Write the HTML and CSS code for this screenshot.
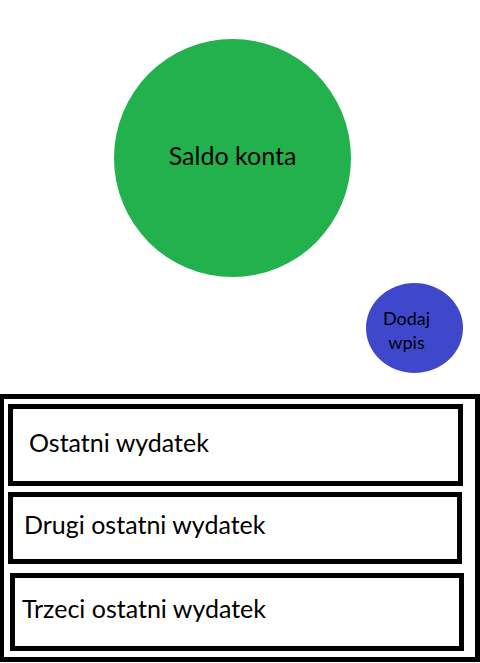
FILE: index.html
```html
<!DOCTYPE html>
<html lang="pl">
<head>
<meta charset="utf-8">
<title>Saldo</title>
<link rel="stylesheet" href="styles.css">
</head>
<body>
<main class="screen">
  <section class="top">
    <div class="balance">Saldo konta</div>
    <button class="add-btn" type="button">Dodaj<br>wpis</button>
  </section>
  <section class="expenses">
    <div class="expense expense-1">Ostatni wydatek</div>
    <div class="expense expense-2">Drugi ostatni wydatek</div>
    <div class="expense expense-3">Trzeci ostatni wydatek</div>
  </section>
</main>
</body>
</html>
```
FILE: styles.css
```css
html, body {
  margin: 0;
  padding: 0;
  background: #ffffff;
}

body {
  font-family: Lato, "Open Sans", "Liberation Sans", sans-serif;
  color: #000000;
  width: 480px;
  height: 663px;
  overflow: hidden;
}

.screen {
  display: flex;
  flex-direction: column;
}

.top {
  height: 394px;
  display: flex;
  flex-direction: column;
}

.balance {
  margin-top: 39px;
  margin-left: 114px;
  width: 237px;
  height: 238px;
  border-radius: 50%;
  background: #22b14c;
  display: flex;
  align-items: center;
  justify-content: center;
  font-size: 25px;
  padding-bottom: 7px;
  box-sizing: border-box;
}

.add-btn {
  align-self: flex-end;
  margin-top: 6px;
  margin-right: 17px;
  width: 97px;
  height: 90px;
  border: none;
  border-radius: 50%;
  background: #3f48cc;
  color: #000000;
  font-family: inherit;
  font-size: 18px;
  line-height: 24px;
  padding: 4px 16px 0 0;
  text-align: center;
}

.expenses {
  height: 268px;
  box-sizing: border-box;
  border-style: solid;
  border-color: #000000;
  border-width: 5px 5px 5px 4px;
  display: flex;
  flex-direction: column;
}

.expense {
  border: 5px solid #000000;
  box-sizing: border-box;
  font-size: 25px;
  line-height: 30px;
}

.expense-1 {
  margin: 5px 0 0 4px;
  width: 455px;
  height: 82px;
  padding: 18px 0 0 16px;
}

.expense-2 {
  margin: 6px 0 0 4px;
  width: 454px;
  height: 72px;
  padding: 12px 0 0 11px;
}

.expense-3 {
  margin: 9px 0 0 6px;
  width: 454px;
  height: 78px;
  padding: 15px 0 0 7px;
}
```
